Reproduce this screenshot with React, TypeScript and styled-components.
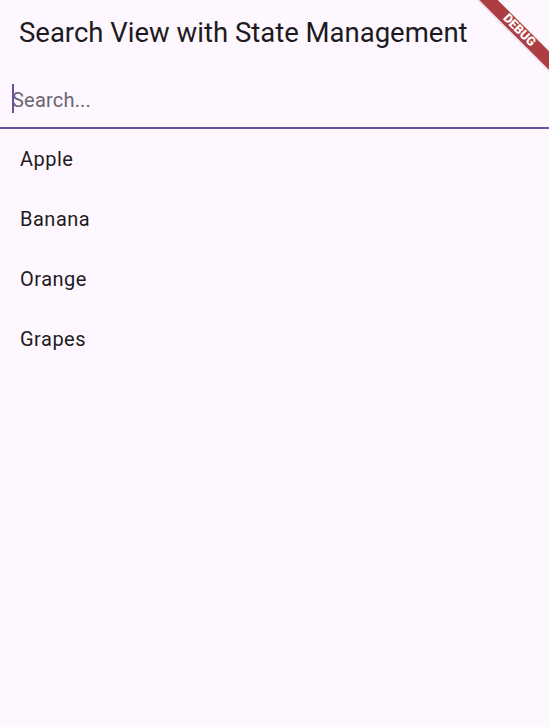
import React, { useState } from 'react';
import styled, { createGlobalStyle } from 'styled-components';

const GlobalStyle = createGlobalStyle`
  html, body {
    margin: 0;
    padding: 0;
    background: #fef7ff;
  }
  body {
    font-family: Roboto, 'Noto Sans', 'Liberation Sans', sans-serif;
    color: #1d1b20;
  }
`;

const Page = styled.div`
  position: relative;
  min-height: 100vh;
  overflow: hidden;
  background: #fef7ff;
`;

const AppBar = styled.header`
  height: 64px;
  display: flex;
  align-items: center;
  padding: 1px 16px 0 19px;
  box-sizing: border-box;
`;

const Title = styled.h1`
  margin: 0;
  font-size: 27.5px;
  font-weight: 400;
  line-height: 34px;
  color: #1d1b20;
`;

const SearchBox = styled.div`
  position: relative;
  height: 63px;
  border-bottom: 2px solid #6750a4;
`;

const SearchInput = styled.input`
  box-sizing: border-box;
  width: 100%;
  height: 100%;
  padding: 8px 12px 0 12px;
  border: none;
  outline: none;
  background: transparent;
  font-family: Roboto, 'Liberation Sans', sans-serif;
  font-size: 20px;
  letter-spacing: 0.2px;
  color: #1d1b20;
  caret-color: transparent;

  &::placeholder {
    color: #6b6670;
  }
`;

const Caret = styled.span`
  position: absolute;
  left: 12px;
  top: 20px;
  width: 2px;
  height: 29px;
  background: #6750a4;
`;

const List = styled.ul`
  list-style: none;
  margin: 0;
  padding: 0;
`;

const Item = styled.li`
  height: 60px;
  display: flex;
  align-items: center;
  padding: 0 16px 0 20px;
  font-size: 20px;
  letter-spacing: 0.5px;
  color: #1d1b20;
`;

const Banner = styled.div`
  position: absolute;
  top: 24px;
  right: -30px;
  width: 120px;
  height: 13px;
  background: #ad3d40;
  transform: rotate(45deg);
  display: flex;
  align-items: center;
  justify-content: center;
  color: #ffffff;
  font-family: Roboto, 'Liberation Sans', sans-serif;
  font-size: 12.5px;
  font-weight: 900;
  line-height: 1;
  box-shadow: 0 1px 3px rgba(0, 0, 0, 0.15);
`;

const fruits = ['Apple', 'Banana', 'Orange', 'Grapes'];

export default function App() {
  const [query, setQuery] = useState('');
  const shown = fruits.filter((f) => f.toLowerCase().includes(query.toLowerCase()));

  return (
    <Page>
      <GlobalStyle />
      <AppBar>
        <Title>Search View with State Management</Title>
      </AppBar>
      <SearchBox>
        <SearchInput
          placeholder="Search..."
          value={query}
          onChange={(e) => setQuery(e.target.value)}
        />
        <Caret />
      </SearchBox>
      <List>
        {shown.map((fruit) => (
          <Item key={fruit}>{fruit}</Item>
        ))}
      </List>
      <Banner>DEBUG</Banner>
    </Page>
  );
}
